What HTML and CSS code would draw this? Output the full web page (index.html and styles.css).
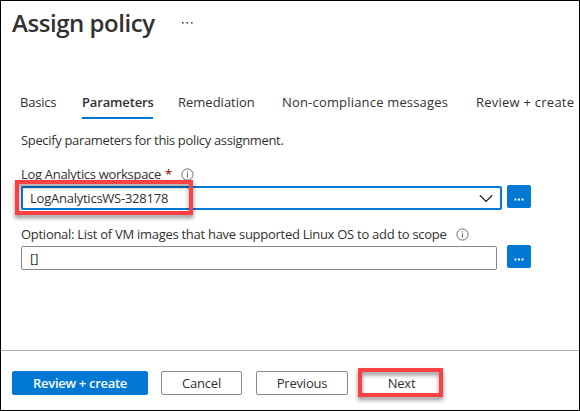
FILE: index.html
```html
<!DOCTYPE html>
<html lang="en">
<head>
<meta charset="utf-8">
<title>Assign policy</title>
<link rel="stylesheet" href="styles.css">
</head>
<body>
<main class="page">
  <header class="header">
    <h1 class="title">Assign policy</h1>
    <svg class="more" width="13" height="4" viewBox="0 0 13 4"><g fill="#444"><rect x="1" y="1" width="1.6" height="1.6"/><rect x="5.5" y="1" width="1.6" height="1.6"/><rect x="10" y="1" width="1.6" height="1.6"/></g></svg>
  </header>
  <nav class="tabs">
    <a class="tab basics">Basics</a>
    <a class="tab params active">Parameters</a>
    <a class="tab remed">Remediation</a>
    <a class="tab noncomp">Non-compliance messages</a>
    <a class="tab review">Review + create</a>
  </nav>
  <section class="content">
    <p class="intro">Specify parameters for this policy assignment.</p>
    <div class="label"><span class="label-workspace">Log Analytics workspace</span><span class="required">*</span>
      <svg class="info" width="13" height="13" viewBox="0 0 13 13"><circle cx="6.5" cy="6.5" r="5.6" fill="none" stroke="#6b6b6b"/><path d="M6.5 5.5v4M6.5 3.2v1.2" stroke="#6b6b6b" stroke-width="1.1"/></svg>
    </div>
    <div class="row">
      <div class="select"><span class="value">LogAnalyticsWS-328178</span>
        <svg width="14" height="9" viewBox="0 0 14 9"><path d="M.8 1.2 7 7.4l6.2-6.2" fill="none" stroke="#222" stroke-width="1.3"/></svg>
        <i class="mark mark-select"></i>
      </div>
      <button class="browse"><svg width="10" height="3" viewBox="0 0 10 3"><path d="M.5 1.5h2M4 1.5h2M7.5 1.5h2" stroke="#fff" stroke-width="2"/></svg></button>
    </div>
    <div class="label second"><span class="label-optional">Optional: List of VM images that have supported Linux OS to add to scope</span>
      <svg class="info" width="13" height="13" viewBox="0 0 13 13"><circle cx="6.5" cy="6.5" r="5.6" fill="none" stroke="#6b6b6b"/><path d="M6.5 5.5v4M6.5 3.2v1.2" stroke="#6b6b6b" stroke-width="1.1"/></svg>
    </div>
    <div class="row last">
      <div class="input">[]</div>
      <button class="browse"><svg width="10" height="3" viewBox="0 0 10 3"><path d="M.5 1.5h2M4 1.5h2M7.5 1.5h2" stroke="#fff" stroke-width="2"/></svg></button>
    </div>
  </section>
  <footer class="footer">
    <button class="btn primary">Review + create</button>
    <button class="btn cancel">Cancel</button>
    <button class="btn previous">Previous</button>
    <button class="btn next">Next<i class="mark mark-next"></i></button>
  </footer>
</main>
</body>
</html>
```
FILE: styles.css
```css
* { box-sizing: border-box; }
body {
  margin: 0;
  font: 13px/18px "Open Sans", "Noto Sans", sans-serif;
  color: #323130;
  background: #fff;
}
.page {
  display: flex;
  flex-direction: column;
  width: 580px;
  height: 411px;
  border: 1px solid #000;
  overflow: hidden;
}
.header {
  display: flex;
  align-items: flex-start;
  height: 92px;
  padding: 5px 0 0 11px;
}
.title {
  width: 169px;
  margin: 0;
  font-size: 24px;
  line-height: 34px;
  font-weight: 600;
  letter-spacing: -0.45px;
  white-space: nowrap;
}
.more { margin-top: 15px; }
.tabs {
  display: flex;
  gap: 25px;
  height: 27px;
  padding-left: 20px;
  white-space: nowrap;
}
.tab { height: 26px; flex: none; }
.basics { width: 36px; margin-left: -1px; margin-right: 1px; letter-spacing: -0.2px; }
.params { width: 71px; }
.remed { width: 79px; }
.noncomp { width: 169px; letter-spacing: 0.18px; }
.review { letter-spacing: 0.24px; }
.active { font-weight: 600; border-bottom: 2px solid #0078d4; letter-spacing: -0.15px; }
.content { flex: 1; padding: 11px 0 0 20px; white-space: nowrap; }
.intro { margin: 0; letter-spacing: -0.34px; }
.label {
  display: flex;
  align-items: center;
  height: 18px;
  margin-top: 16px;
}
.label-workspace { letter-spacing: -0.3px; }
.label-optional { letter-spacing: -0.275px; }
.value { letter-spacing: -0.24px; }
.required { margin-left: 4px; color: #a4262c; font-weight: 600; }
.info { margin-left: 9px; }
.row { display: flex; align-items: flex-start; height: 26px; margin-top: 2px; }
.select, .input {
  position: relative;
  display: flex;
  align-items: center;
  justify-content: space-between;
  height: 24px;
  border-radius: 2px;
  margin-top: 1px;
}
.select { width: 481px; padding: 0 7px; border: 2px solid #0078d4; }
.input { width: 476px; padding: 0 8px; border: 1px solid #8a8886; }
.browse {
  display: flex;
  align-items: center;
  justify-content: center;
  width: 24px;
  height: 23px;
  margin-left: 5px;
  padding: 5px 0 0;
  border: 0;
  border-radius: 2px;
  background: #0078d4;
}
.second { margin-top: 14px; }
.last .browse { margin-left: 10px; }
.footer {
  display: flex;
  height: 60px;
  padding: 20px 0 0 11px;
  border-top: 1px solid #b3b0ad;
}
.btn {
  position: relative;
  height: 24px;
  padding: 0;
  font: 13px/20px "Open Sans", "Noto Sans", sans-serif;
  color: #323130;
  background: #fff;
  border: 1px solid #8a8886;
  border-radius: 2px;
  letter-spacing: -0.2px;
}
.primary { width: 136px; font-weight: 600; color: #fff; background: #0078d4; border-color: #0078d4; letter-spacing: -0.3px; }
.cancel { width: 81px; margin-left: 13px; }
.previous { width: 92px; margin-left: 14px; }
.next { width: 80px; margin-left: 13px; padding-left: 1px; }
.mark {
  position: absolute;
  border: 4px solid #fb4143;
  filter: drop-shadow(0 3px 2px rgba(0, 0, 0, .45));
}
.mark-select { left: -8px; top: -8px; width: 178px; height: 35px; }
.mark-next { left: -4px; top: -4px; width: 85px; height: 29px; }
```
